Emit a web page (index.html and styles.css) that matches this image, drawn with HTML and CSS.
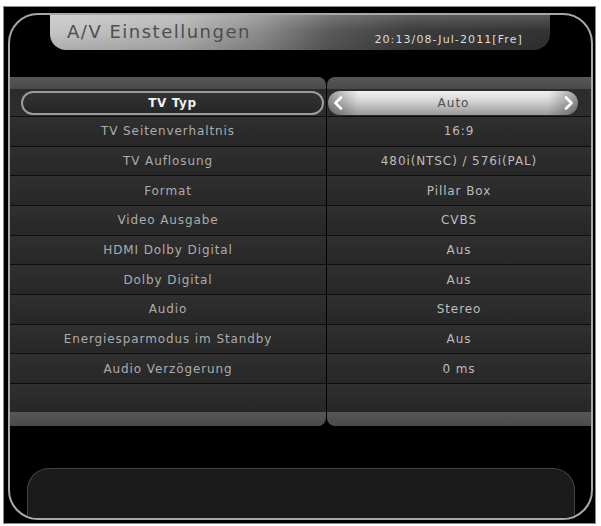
FILE: index.html
```html
<!DOCTYPE html>
<html lang="de">
<head>
<meta charset="utf-8">
<title>A/V Einstellungen</title>
<link rel="stylesheet" href="styles.css">
</head>
<body>
<div class="screen">
  <div class="frame">
    <div class="tab">
      <span class="title">A/V Einstellungen</span>
      <span class="date">20:13/08-Jul-2011[Fre]</span>
    </div>
    <div class="list">
      <div class="col col-left">
        <div class="bar bar-top"></div>
        <div class="row row-sel"><div class="pill pill-dark">TV Typ</div></div>
        <div class="row">TV Seitenverhaltnis</div>
        <div class="row">TV Auflosung</div>
        <div class="row">Format</div>
        <div class="row">Video Ausgabe</div>
        <div class="row">HDMI Dolby Digital</div>
        <div class="row">Dolby Digital</div>
        <div class="row">Audio</div>
        <div class="row">Energiesparmodus im Standby</div>
        <div class="row">Audio Verzögerung</div>
        <div class="row row-empty"></div>
        <div class="bar bar-bottom"></div>
      </div>
      <div class="col col-right">
        <div class="bar bar-top"></div>
        <div class="row row-sel">
          <div class="pill pill-light">
            <svg class="chev" width="10" height="14" viewBox="0 0 10 14"><polyline points="8,1.5 2.5,7 8,12.5" fill="none" stroke="#fff" stroke-width="2.6" stroke-linecap="round" stroke-linejoin="round"/></svg>
            <span class="pill-text">Auto</span>
            <svg class="chev" width="10" height="14" viewBox="0 0 10 14"><polyline points="2,1.5 7.5,7 2,12.5" fill="none" stroke="#fff" stroke-width="2.6" stroke-linecap="round" stroke-linejoin="round"/></svg>
          </div>
        </div>
        <div class="row">16:9</div>
        <div class="row">480i(NTSC) / 576i(PAL)</div>
        <div class="row">Pillar Box</div>
        <div class="row">CVBS</div>
        <div class="row">Aus</div>
        <div class="row">Aus</div>
        <div class="row">Stereo</div>
        <div class="row">Aus</div>
        <div class="row">0 ms</div>
        <div class="row row-empty"></div>
        <div class="bar bar-bottom"></div>
      </div>
    </div>
    <div class="info"></div>
  </div>
</div>
</body>
</html>
```

FILE: styles.css
```css
html, body {
  margin: 0;
  padding: 0;
  background: #fff;
}
body {
  font-family: "DejaVu Sans", "Liberation Sans", sans-serif;
}
.screen {
  box-sizing: border-box;
  margin: 6px 0 0 3px;
  width: 593px;
  height: 518px;
  background: #000;
  border: 1px solid #8a8a8a;
  padding: 6px 2px 3px 4px;
}
.frame {
  box-sizing: border-box;
  height: 100%;
  border: 2px solid #a8a8a8;
  border-radius: 30px;
  overflow: hidden;
  display: flex;
  flex-direction: column;
}
.tab {
  flex: none;
  box-sizing: border-box;
  height: 35px;
  width: 500px;
  margin-left: 40px;
  border-radius: 0 0 16px 16px;
  background:
    linear-gradient(to bottom, rgba(255,255,255,0.18) 0%, rgba(255,255,255,0) 45%, rgba(0,0,0,0.12) 100%),
    linear-gradient(to right, #c6c6c6 0%, #b4b4b4 25%, #8c8c8c 42%, #5a5a5a 56%, #3c3c3c 72%, #333 100%);
  display: flex;
  justify-content: space-between;
  align-items: center;
  padding: 0 27px 0 17px;
}
.title {
  font-size: 18px;
  letter-spacing: 1.5px;
  color: #4e4e4e;
  margin-top: -2px;
}
.date {
  font-size: 11px;
  letter-spacing: 1.1px;
  color: #dcdcdc;
  margin-top: 13px;
}
.list {
  flex: none;
  margin-top: 27px;
  display: flex;
  gap: 1px;
}
.col {
  display: flex;
  flex-direction: column;
}
.col-left { width: 316px; }
.col-right { width: 264px; }
.bar {
  background: linear-gradient(to bottom, #575757, #4a4a4a);
}
.bar-top { height: 12px; }
.bar-bottom { height: 14px; }
.col-left .bar-top { border-top-right-radius: 8px; }
.col-right .bar-top { border-top-left-radius: 8px; }
.col-left .bar-bottom { border-bottom-right-radius: 8px; }
.col-right .bar-bottom { border-bottom-left-radius: 8px; }
.row {
  box-sizing: border-box;
  height: 29.667px;
  border-top: 1px solid #0e0e0e;
  background: linear-gradient(to bottom, #303030 0%, #2b2b2b 50%, #272727 100%);
  display: flex;
  align-items: center;
  justify-content: center;
  font-size: 12px;
  letter-spacing: 0.9px;
  color: #acacac;
  white-space: nowrap;
}
.col-right .row { color: #bcbcbc; }
.row-sel {
  height: 27px;
  border-top: none;
  background: #2c2c2c;
}
.row-empty {
  height: 29px;
}
.pill {
  box-sizing: border-box;
  height: 24px;
  border-radius: 12px;
  display: flex;
  align-items: center;
}
.pill-dark {
  width: 303px;
  margin-left: 11px;
  margin-right: 2px;
  border: 2px solid #9c9c9c;
  background: linear-gradient(to bottom, #333, #262626);
  justify-content: center;
  color: #f2f2f2;
  font-weight: bold;
  letter-spacing: 0.6px;
}
.pill-light {
  width: 250px;
  margin-left: 1px;
  margin-right: 13px;
  background:
    linear-gradient(to right, rgba(0,0,0,0.35) 0%, rgba(0,0,0,0) 12%, rgba(0,0,0,0) 88%, rgba(0,0,0,0.35) 100%),
    linear-gradient(to bottom, #f2f2f2 0%, #d6d6d6 40%, #b2b2b2 75%, #9a9a9a 100%);
  justify-content: space-between;
  padding: 0 4px 0 5px;
}
.pill-text {
  color: #505050;
  font-size: 12px;
  letter-spacing: 1px;
}
.chev { display: block; }
.info {
  flex: 1;
  margin: 42px 16px 0 17px;
  border: 1px solid #444;
  border-bottom: none;
  border-radius: 22px 22px 0 0;
  background: #1b1b1b;
}
```
